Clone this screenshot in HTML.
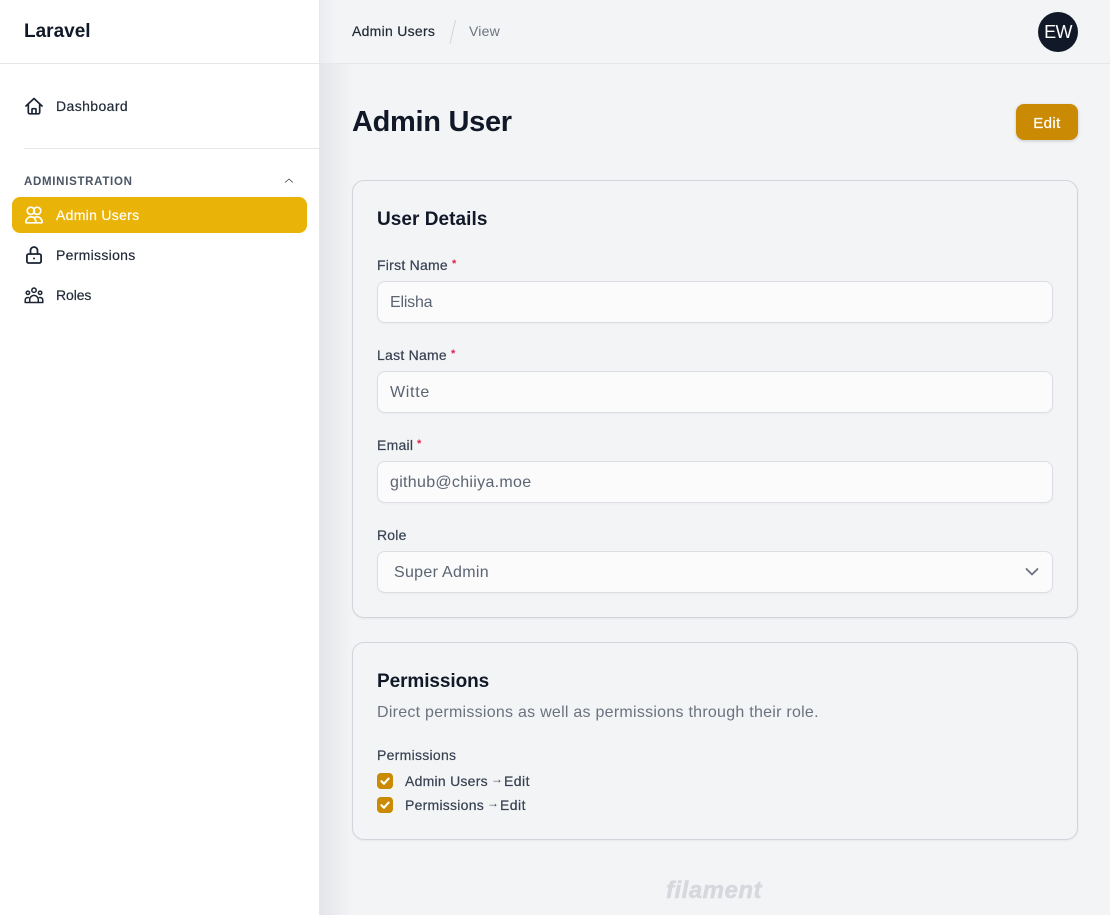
<!DOCTYPE html>
<html><head><meta charset="utf-8"><style>
*{box-sizing:border-box;margin:0;padding:0}
html,body{width:1110px;height:915px;overflow:hidden;background:#f3f4f6;font-family:"Liberation Sans",sans-serif;color:#111827}
.t{position:absolute;white-space:nowrap;line-height:20px;font-size:14px}
.b{font-weight:700}
.m{-webkit-text-stroke:.2px}
.box{position:absolute;left:377px;width:676px;height:42px;background:#fbfbfc;border:1px solid #dcdee3;border-radius:8px;box-shadow:0 1px 2px rgba(0,0,0,.04)}
.card{position:absolute;left:352px;width:726px;border:1px solid #d1d5db;border-radius:12px;box-shadow:0 1px 2px rgba(0,0,0,.05)}
.lab{color:#374151;font-size:14px}
.val{color:#5b6472;font-size:16px;left:390px}
.req{color:#e11d48;font-size:11px;line-height:10px;font-weight:700}
.cb{position:absolute;left:377px;width:16px;height:16px;background:#ca8a04;border-radius:4px}
svg{position:absolute}
.ic{fill:none;stroke:#1a2433;stroke-linecap:round;stroke-linejoin:round}
</style></head><body>
<div style="position:absolute;left:320px;top:64px;width:32px;height:851px;background:linear-gradient(90deg,#e4e5e8,#f3f4f6)"></div>
<div style="position:absolute;left:320px;top:0;width:16px;height:64px;background:linear-gradient(90deg,#ebecef,#f3f4f6)"></div>
<div style="position:absolute;left:320px;top:63px;width:790px;height:1px;background:#e5e7eb"></div>
<div style="position:absolute;left:0;top:0;width:320px;height:915px;background:#fff;border-right:1px solid #e5e7eb"></div>
<div style="position:absolute;left:0;top:63px;width:320px;height:1px;background:#e5e7eb"></div>
<div style="position:absolute;left:24px;top:148px;width:295px;height:1px;background:#e5e7eb"></div>

<div class="t b" style="left:24px;top:22px;font-size:19px">Laravel</div>

<svg class="ic" style="left:24px;top:96px" width="20" height="20" viewBox="0 0 20 20" stroke-width="1.700"><path d="M2 10 10 2.500 18 10M4.300 8.300v8a1.500 1.500 0 0 0 1.500 1.500h8.400a1.500 1.500 0 0 0 1.500-1.500v-8M8 17.800v-4.300a.8.8 0 0 1 .8-.8h2.400a.8.8 0 0 1 .8.8v4.300"/></svg>
<div class="t m" style="left:56px;top:96px;letter-spacing:.4px;color:#1f2937">Dashboard</div>

<div class="t b" style="left:24px;top:172px;font-size:11.5px;letter-spacing:.7px;color:#4b5563">ADMINISTRATION</div>
<svg style="left:284px;top:177px" width="10" height="7" viewBox="0 0 10 7" fill="none" stroke="#374151" stroke-width=".8"><path d="M1 5.500 5 2l4 3.500"/></svg>

<div style="position:absolute;left:12px;top:197px;width:295px;height:36px;background:#eab308;border-radius:8px"></div>
<svg class="ic" style="left:24px;top:205px;stroke:#fff" width="20" height="20" viewBox="0 0 20 20" stroke-width="1.700"><circle cx="6.800" cy="5.800" r="3.600"/><circle cx="13.200" cy="5.800" r="3.600"/><path d="M2.500 17.800h15c.5 0 .8-.4.7-1-.5-3-2.600-5-5.200-5-1.300 0-2.300.3-3 1-.7-.7-1.700-1-3-1-2.600 0-4.700 2-5.200 5-.1.600.2 1 .7 1zM10 12.800c1.200 1.200 2 3 2 5"/></svg>
<div class="t m" style="left:56px;top:205px;color:#fff;letter-spacing:.3px">Admin Users</div>

<svg class="ic" style="left:24px;top:245px" width="20" height="20" viewBox="0 0 20 20" stroke-width="1.800"><rect x="2.900" y="9" width="14.200" height="9" rx="1.800"/><path d="M6.500 9V5.500a3.500 3.500 0 0 1 7 0V9"/><circle cx="10" cy="13.500" r="1" fill="#1a2433" stroke="none"/></svg>
<div class="t m" style="left:56px;top:245px;letter-spacing:.3px;color:#1f2937">Permissions</div>

<svg class="ic" style="left:24px;top:285px" width="20" height="20" viewBox="0 0 20 20" stroke-width="1.500"><circle cx="10" cy="5.200" r="2.200"/><circle cx="3.900" cy="7.800" r="1.700"/><circle cx="16.100" cy="7.800" r="1.700"/><path d="M5.700 17.500v-2.800a4.300 4.300 0 0 1 8.600 0v2.800zM1.200 17.500v-2.400c0-1.500 1-2.600 3.300-2.600M18.800 17.500v-2.400c0-1.500-1-2.600-3.300-2.600M1.200 17.500h17.600"/></svg>
<div class="t m" style="left:56px;top:285px;letter-spacing:-.1px;color:#1f2937">Roles</div>

<div class="t m" style="left:352px;top:21px;color:#1f2937;letter-spacing:.28px">Admin Users</div>
<svg style="left:448px;top:19px" width="10" height="26"><path d="M7.500 1 2 24.500" stroke="#d1d5db" fill="none"/></svg>
<div class="t" style="left:469px;top:21px;color:#6b7280;letter-spacing:.2px">View</div>

<div style="position:absolute;left:1038px;top:12px;width:40px;height:40px;border-radius:50%;background:#111827;color:#fff;font-size:18px;line-height:40px;text-align:center;letter-spacing:-.6px">EW</div>

<div class="t b" style="left:352px;top:102px;font-size:29px;line-height:40px;letter-spacing:-.3px">Admin User</div>
<div class="m" style="position:absolute;left:1016px;top:104px;width:62px;height:36px;background:#ca8a04;border-radius:8px;color:#fff;font-size:15px;line-height:37px;text-align:center;box-shadow:0 1px 3px rgba(0,0,0,.18);letter-spacing:.4px;padding-top:1px">Edit</div>

<div class="card" style="top:180px;height:438px"></div>
<div class="t b" style="left:377px;top:210px;font-size:19px;letter-spacing:.05px">User Details</div>

<div class="t lab m" style="left:377px;top:255px;letter-spacing:.25px">First Name</div>
<div class="t req" style="left:452px;top:259px">*</div>
<div class="box" style="top:281px"></div>
<div class="t val" style="top:293px;letter-spacing:-.2px">Elisha</div>

<div class="t lab m" style="left:377px;top:345px;letter-spacing:.25px">Last Name</div>
<div class="t req" style="left:451px;top:349px">*</div>
<div class="box" style="top:371px"></div>
<div class="t val" style="top:383px;letter-spacing:.7px">Witte</div>

<div class="t lab m" style="left:377px;top:435px;letter-spacing:.25px">Email</div>
<div class="t req" style="left:417px;top:439px">*</div>
<div class="box" style="top:461px"></div>
<div class="t val" style="top:473px;letter-spacing:.3px">github@chiiya.moe</div>

<div class="t lab m" style="left:377px;top:525px;letter-spacing:.2px">Role</div>
<div class="box" style="top:551px"></div>
<div class="t val" style="top:563px;left:394px;letter-spacing:.3px">Super Admin</div>
<svg style="left:1025px;top:567px" width="14" height="10" fill="none" stroke="#6b7280" stroke-width="1.800" stroke-linecap="round" stroke-linejoin="round"><path d="M1.500 2 7 7.500 12.500 2"/></svg>

<div class="card" style="top:642px;height:198px"></div>
<div class="t b" style="left:377px;top:672px;font-size:19px;letter-spacing:-.08px">Permissions</div>
<div class="t" style="left:377px;top:703px;font-size:16px;color:#6b7280;letter-spacing:.26px">Direct permissions as well as permissions through their role.</div>
<div class="t lab m" style="left:377px;top:745px;letter-spacing:.28px">Permissions</div>

<div class="cb" style="top:773px"></div>
<svg style="left:377px;top:773px" width="16" height="16" fill="none" stroke="#fff" stroke-width="2.200" stroke-linecap="round" stroke-linejoin="round"><path d="M4.500 8.300 7 10.700 11.500 5.700"/></svg>
<div class="t lab m" style="left:405px;top:771px;letter-spacing:.25px">Admin Users</div>
<div class="t lab" style="left:491px;top:769px;font-size:12px">→</div>
<div class="t lab m" style="left:504px;top:771px;letter-spacing:.45px">Edit</div>
<div class="cb" style="top:797px"></div>
<svg style="left:377px;top:797px" width="16" height="16" fill="none" stroke="#fff" stroke-width="2.200" stroke-linecap="round" stroke-linejoin="round"><path d="M4.500 8.300 7 10.700 11.500 5.700"/></svg>
<div class="t lab m" style="left:405px;top:795px;letter-spacing:.25px">Permissions</div>
<div class="t lab" style="left:487px;top:793px;font-size:12px">→</div>
<div class="t lab m" style="left:500px;top:795px;letter-spacing:.45px">Edit</div>

<div class="t b" style="left:666px;top:879px;font-size:24px;line-height:24px;font-style:italic;color:#d6d8dd;letter-spacing:.5px;-webkit-text-stroke:.5px #d6d8dd">filament</div>
</body></html>
